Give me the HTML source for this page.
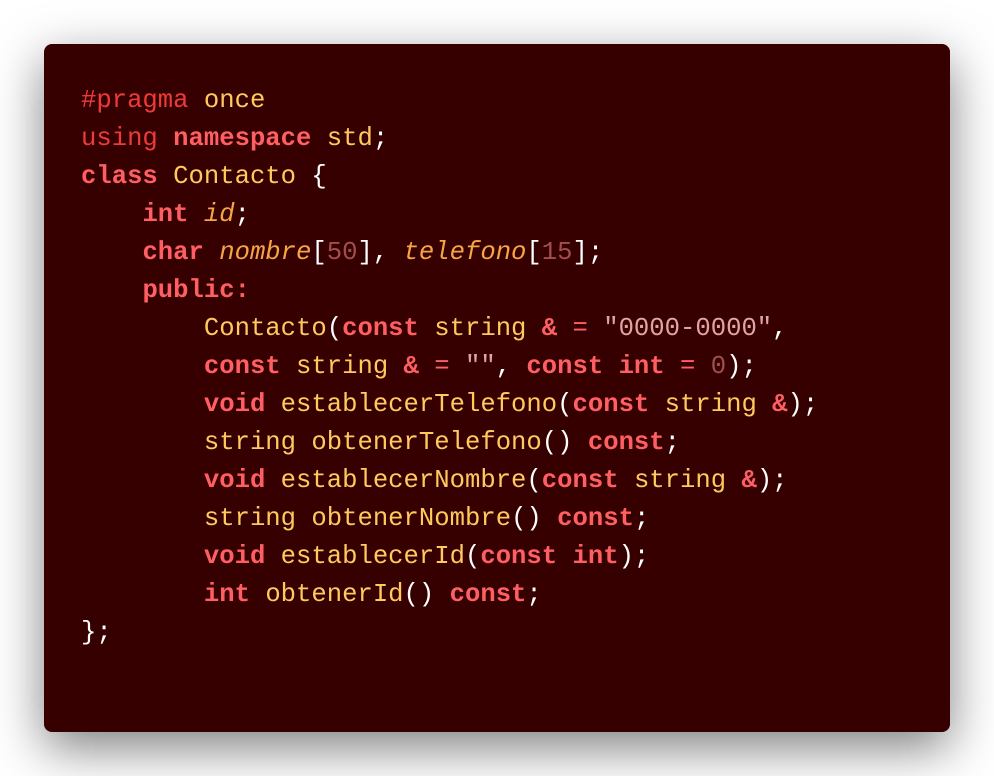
<!DOCTYPE html>
<html><head><meta charset="utf-8"><style>
html,body{margin:0;padding:0;background:#fff;width:994px;height:776px;overflow:hidden}
.card{position:absolute;left:44px;top:44px;width:906px;height:688px;background:#360000;border-radius:8px;box-shadow:0 16px 50px rgba(0,0,0,0.5)}
pre{position:absolute;left:81px;top:82px;margin:0;font-family:"Liberation Mono",monospace;font-size:25.6px;line-height:38px;color:#fff}
.p{color:#f03a3a}
.k{color:#ff5f62;font-weight:bold}
.y{color:#ffc95e}
.i{color:#f7a543;font-style:italic}
.n{color:#a24e4e}
.s{color:#e3a3a3}
.o{color:#ff5f62}
</style></head><body><div class="card"></div>
<pre><span class="p">#pragma</span> <span class="y">once</span>
<span class="p">using</span> <span class="k">namespace</span> <span class="y">std</span>;
<span class="k">class</span> <span class="y">Contacto</span> {
    <span class="k">int</span> <span class="i">id</span>;
    <span class="k">char</span> <span class="i">nombre</span>[<span class="n">50</span>], <span class="i">telefono</span>[<span class="n">15</span>];
    <span class="k">public:</span>
        <span class="y">Contacto</span>(<span class="k">const</span> <span class="y">string</span> <span class="k">&amp;</span> <span class="o">=</span> <span class="s">"0000-0000"</span>,
        <span class="k">const</span> <span class="y">string</span> <span class="k">&amp;</span> <span class="o">=</span> <span class="s">""</span>, <span class="k">const</span> <span class="k">int</span> <span class="o">=</span> <span class="n">0</span>);
        <span class="k">void</span> <span class="y">establecerTelefono</span>(<span class="k">const</span> <span class="y">string</span> <span class="k">&amp;</span>);
        <span class="y">string obtenerTelefono</span>() <span class="k">const</span>;
        <span class="k">void</span> <span class="y">establecerNombre</span>(<span class="k">const</span> <span class="y">string</span> <span class="k">&amp;</span>);
        <span class="y">string obtenerNombre</span>() <span class="k">const</span>;
        <span class="k">void</span> <span class="y">establecerId</span>(<span class="k">const</span> <span class="k">int</span>);
        <span class="k">int</span> <span class="y">obtenerId</span>() <span class="k">const</span>;
};</pre>
</body></html>
